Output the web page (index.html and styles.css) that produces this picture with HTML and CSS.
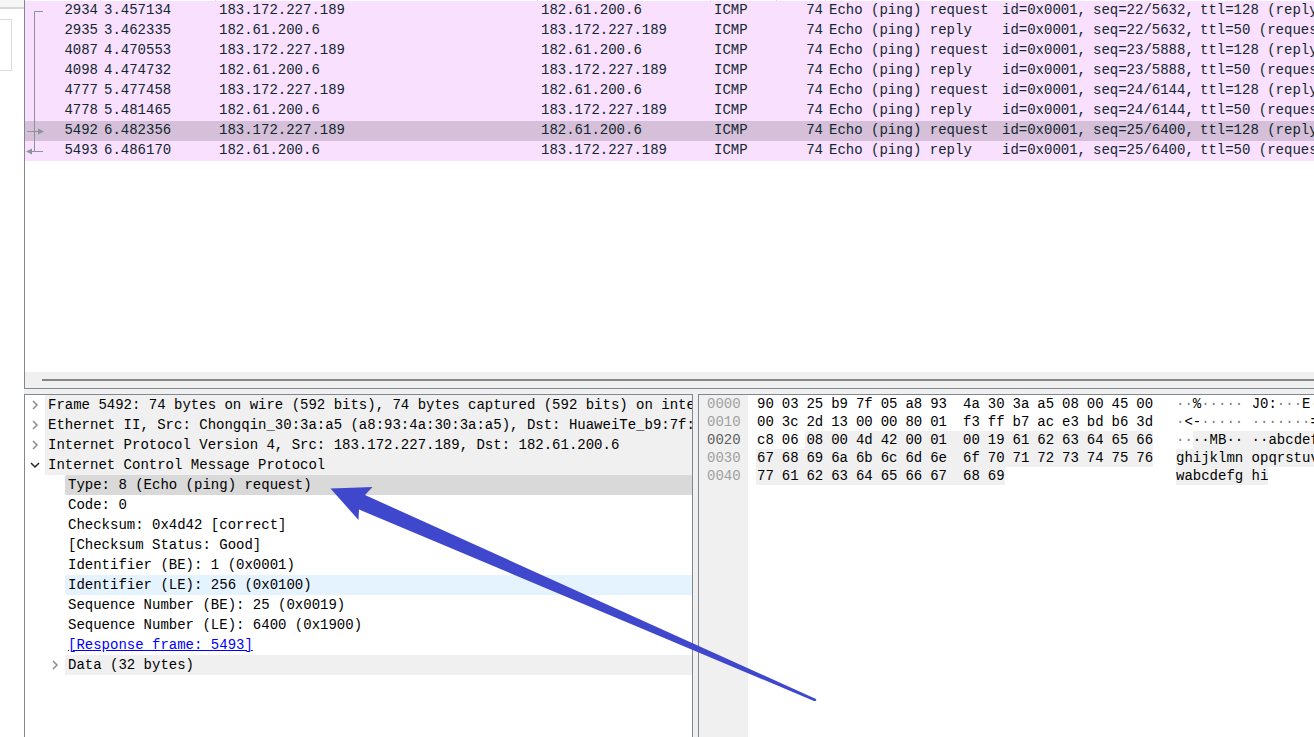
FILE: index.html
```
<!DOCTYPE html>
<html lang="en">
<head>
<meta charset="utf-8">
<title>ICMP packet capture</title>
<link rel="stylesheet" href="styles.css">
</head>
<body>
<div class="app">
  <aside class="strip"><div class="strip-head"></div><div class="strip-box"></div></aside>
  <main class="panes">
    <section class="packets">
      <div class="ticks"><i class="c-no"></i><i class="c-time"></i><i class="c-src"></i><i class="c-dst"></i><i class="c-proto"></i><i class="c-len"></i></div>
      <table class="packet-table">
        <colgroup><col class="c-no"><col class="c-time"><col class="c-src"><col class="c-dst"><col class="c-proto"><col class="c-len"><col></colgroup>
        <tbody id="rows"></tbody>
      </table>
      <svg class="relation" width="20" height="160" viewBox="0 0 20 160" fill="none" stroke="#8b9499">
        <path d="M18 11.5H9.500V151.500M2 131.500H14M6 151.500H18"/>
        <path d="M13 128.500L19 131.500L13 134.500ZM7 148.500L1 151.500L7 154.500Z" fill="#8b9499" stroke="none"/>
      </svg>
      <div class="scroll"><div class="thumb"></div></div>
    </section>
    <div class="lower">
      <section class="tree">
        <ul>
          <li class="node group"><button aria-label="Expand frame"><svg width="7" height="10" viewBox="0 0 7 10"><path d="M1 1L5 5L1 9"/></svg></button><span>Frame 5492: 74 bytes on wire (592 bits), 74 bytes captured (592 bits) on interface</span></li>
          <li class="node group"><button aria-label="Expand ethernet"><svg width="7" height="10" viewBox="0 0 7 10"><path d="M1 1L5 5L1 9"/></svg></button><span>Ethernet II, Src: Chongqin_30:3a:a5 (a8:93:4a:30:3a:a5), Dst: HuaweiTe_b9:7f:05</span></li>
          <li class="node group"><button aria-label="Expand internet protocol"><svg width="7" height="10" viewBox="0 0 7 10"><path d="M1 1L5 5L1 9"/></svg></button><span>Internet Protocol Version 4, Src: 183.172.227.189, Dst: 182.61.200.6</span></li>
          <li class="node group open"><button aria-label="Collapse ICMP"><svg width="10" height="7" viewBox="0 0 10 7"><path d="M1 1L5 5L9 1"/></svg></button><span>Internet Control Message Protocol</span></li>
          <li>
            <ul class="children">
              <li class="node selected"><span>Type: 8 (Echo (ping) request)</span></li>
              <li class="node"><span>Code: 0</span></li>
              <li class="node"><span>Checksum: 0x4d42 [correct]</span></li>
              <li class="node"><span>[Checksum Status: Good]</span></li>
              <li class="node"><span>Identifier (BE): 1 (0x0001)</span></li>
              <li class="node hover"><span>Identifier (LE): 256 (0x0100)</span></li>
              <li class="node"><span>Sequence Number (BE): 25 (0x0019)</span></li>
              <li class="node"><span>Sequence Number (LE): 6400 (0x1900)</span></li>
              <li class="node"><span><a href="#p5493">[Response frame: 5493]</a></span></li>
              <li class="node group"><button aria-label="Expand data"><svg width="7" height="10" viewBox="0 0 7 10"><path d="M1 1L5 5L1 9"/></svg></button><span>Data (32 bytes)</span></li>
            </ul>
          </li>
        </ul>
      </section>
      <section class="hex">
        <div class="gutter"><div>0000</div><div>0010</div><div class="current">0020</div><div>0030</div><div>0040</div></div>
        <div class="bytes" id="bytes"></div>
        <div class="ascii">
          <div><s>··</s>%<s>·····</s> J0:<s>···</s>E<s>·</s></div>
          <div><s>·</s>&lt;-<s>·····</s> <s>·······</s>=</div>
          <div><s>··</s><mark>··MB·· ··abcdef</mark></div>
          <div><mark>ghijklmn opqrstuv</mark></div>
          <div><mark>wabcdefg hi</mark></div>
        </div>
      </section>
    </div>
  </main>
  <svg class="pointer" width="490" height="216" viewBox="0 0 490 216"><path d="M.5 1.500L42.500 0L35 8L486 212Q487 214.500 484 214L29 22.500L28.500 33Z" fill="#3f48cc"/></svg>
</div>
<script src="app.js"></script>
</body>
</html>
```

FILE: app.js
```
const client = "183.172.227.189";
const server = "182.61.200.6";
const packets = [
  [2934, "3.457134", 2935, "22/5632"],
  [2935, "3.462335", 2934, "22/5632"],
  [4087, "4.470553", 4098, "23/5888"],
  [4098, "4.474732", 4087, "23/5888"],
  [4777, "5.477458", 4778, "24/6144"],
  [4778, "5.481465", 4777, "24/6144"],
  [5492, "6.482356", 5493, "25/6400"],
  [5493, "6.486170", 5492, "25/6400"]
];
document.getElementById("rows").innerHTML = packets.map(([no, time, peer, seq], i) => {
  const request = i % 2 === 0;
  return `<tr id="p${no}"${no === 5492 ? ' class="selected"' : ""}>
    <td class="num">${no}</td><td>${time}</td>
    <td>${request ? client : server}</td><td>${request ? server : client}</td>
    <td>ICMP</td><td class="num">74</td>
    <td><div class="info"><span class="kind">Echo (ping) ${request ? "request" : "reply"}</span><span class="ident">id=0x0001,</span><span class="seq">seq=${seq},</span><span>ttl=${request ? "128 (reply" : "50 (request"} in ${peer})</span></div></td>
  </tr>`;
}).join("");

const dump = [
  "90 03 25 b9 7f 05 a8 93 4a 30 3a a5 08 00 45 00",
  "00 3c 2d 13 00 00 80 01 f3 ff b7 ac e3 bd b6 3d",
  "c8 06 08 00 4d 42 00 01 00 19 61 62 63 64 65 66",
  "67 68 69 6a 6b 6c 6d 6e 6f 70 71 72 73 74 75 76",
  "77 61 62 63 64 65 66 67 68 69"
];
document.getElementById("bytes").innerHTML = dump.map((line, r) => {
  const all = line.split(" ");
  const cells = all.map((b, c) => {
    const on = r * 16 + c >= 34;
    const names = [on ? "on" : "", c === all.length - 1 ? "last" : ""].join(" ").trim();
    return `<span class="${names}">${b}</span>`;
  }).join("");
  return `<div class="byte-row">${cells}</div>`;
}).join("");
```

FILE: styles.css
```
* { box-sizing: border-box; }
body { margin: 0; background: #fff; color: #000; font: 14px/20px "Liberation Mono", monospace; }
ul { list-style: none; margin: 0; padding: 0; }

.app { position: relative; display: grid; grid-template-columns: 24px minmax(0, 1fr); height: 100vh; overflow: hidden; }
.strip-head { height: 9px; background: #f6f6f6; border-bottom: 2px solid #d6d6d6; }
.strip-box { width: 12px; height: 52px; margin-top: 10px; border: 1px solid #d9d9d9; border-left: 0; }
.panes { display: grid; grid-template-rows: minmax(0, 389fr) minmax(0, 348fr); background: #f0f0f0; }

.packets { position: relative; display: flex; flex-direction: column; background: #fff; border: solid #828790; border-width: 0 0 1px 1px; overflow: hidden; }
.ticks { display: flex; height: 1px; }
.ticks i { border-right: 1px solid #d9d9d9; }
.packet-table { width: 100%; table-layout: fixed; border-collapse: collapse; background: #fae0ff; color: #12272e; }
.packet-table td { height: 20px; padding: 0 3px; overflow: hidden; white-space: nowrap; line-height: 18px; vertical-align: top; }
.packet-table td:last-child { padding-right: 0; }
.packet-table .num { text-align: right; }
.packet-table .selected { background: #d5bfd9; }
.c-no { width: 76px; }
.c-time { width: 115px; }
.c-src { width: 322px; }
.c-dst { width: 173px; }
.c-proto { width: 66px; }
.c-len { width: 49px; }
.info { display: flex; }
.info span { flex: none; }
.info .kind { width: 173px; }
.info .ident { width: 91px; }
.info .seq { width: 107px; }
.relation { position: absolute; left: 0; top: 0; }
.scroll { height: 16px; margin-top: auto; padding: 7px 0 0 17px; background: #f0f0f0; }
.thumb { height: 2px; background: #868686; }

.lower { display: grid; grid-template-columns: minmax(0, 669fr) minmax(0, 616fr); gap: 5px; padding-top: 5px; }
.tree { background: #fff; border: 1px solid #828790; border-bottom: 0; overflow: hidden; }
.node { display: flex; height: 20px; }
.node button { display: grid; place-items: center; flex: none; width: 20px; height: 20px; padding: 0; border: 0; background: none; }
.node svg { fill: none; stroke: #8c8c8c; stroke-width: 1.5; }
.open svg { stroke: #222; }
.node > span { flex: 1; min-width: 0; padding-left: 3px; white-space: nowrap; overflow: hidden; }
.node > span:first-child { margin-left: 20px; }
.group > span { background: #f0f0f0; }
.selected > span { background: #d9d9d9; border-radius: 2px 0 0 2px; }
.hover > span { background: #e5f3ff; border-radius: 2px 0 0 2px; }
.children { padding-left: 20px; }
a { color: #00f; }

.hex { display: flex; background: #fff; border: solid #828790; border-width: 1px 0 0 1px; line-height: 18px; overflow: hidden; }
.gutter { flex: none; width: 49px; padding-left: 8px; background: #f0f0f0; color: #a0a0a0; }
.current { color: #606060; }
.bytes { flex: none; width: 404px; margin-left: 8px; }
.byte-row { display: grid; grid-template-columns: repeat(7, 3fr) 4fr repeat(8, 3fr); height: 18px; }
.byte-row span { padding-left: 1px; }
.byte-row .on { background: #f0f0f0; }
.byte-row .last { width: 18px; }
.ascii { flex: none; margin-left: 16px; }
.ascii div { height: 18px; white-space: nowrap; }
.ascii s { text-decoration: none; color: #808080; }
.ascii mark { display: inline-block; height: 18px; background: #f0f0f0; color: #000; }

.pointer { position: absolute; left: 330px; top: 487px; pointer-events: none; }
```
